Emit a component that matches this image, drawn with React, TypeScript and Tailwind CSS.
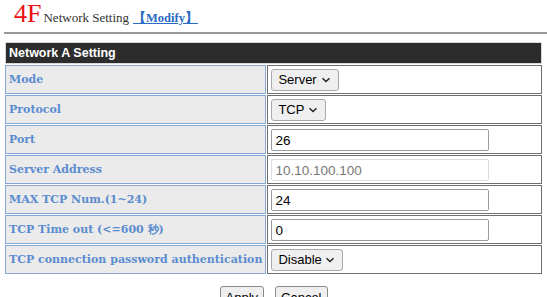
import { useState } from "react";

const rows = [
  { label: "Mode", kind: "select", value: "Server", w: "w-[68px]" },
  { label: "Protocol", kind: "select", value: "TCP", w: "w-[55px]" },
  { label: "Port", kind: "input", value: "26" },
  { label: "Server Address", kind: "input", value: "10.10.100.100", disabled: true },
  { label: "MAX TCP Num.(1~24)", kind: "input", value: "24" },
  { label: "TCP Time out (<=600 秒)", kind: "input", value: "0" },
  { label: "TCP connection password authentication", kind: "select", value: "Disable", w: "w-[72px]" },
];

function Chevron() {
  return (
    <svg width="10" height="6" viewBox="0 0 10 6" className="shrink-0">
      <path d="M1.5 1.2 L5 4.6 L8.5 1.2" fill="none" stroke="#222" strokeWidth="1.4" />
    </svg>
  );
}

export default function App() {
  const [vals, setVals] = useState(rows.map((r) => r.value));

  return (
    <div className="w-[547px] h-[297px] overflow-hidden bg-white font-['Liberation_Serif',serif]">
      {/* title */}
      <div className="flex items-baseline pl-[14px] pt-[1px] h-[32px]">
        <span className="text-[26px] leading-none text-[#ee1111]">4F</span>
        <span className="ml-[2px] text-[13px] text-[#333]">Network Setting</span>
        <a href="#" className="ml-[4px] text-[12.5px] font-bold text-[#2a6bc4] underline">【Modify】</a>
      </div>
      <div className="ml-[4px] h-[2px] bg-[#9a9a9a]" />

      <table className="mt-[7px] ml-[4px] w-[539px] border-separate border-spacing-[1px]">
        <thead>
          <tr>
            <th
              colSpan={2}
              className="h-[22px] bg-[#2c2c2c] border border-[#d8d8d8] px-[3px] text-left text-[12.5px] font-bold text-white font-['Liberation_Sans',sans-serif]"
            >
              Network A Setting
            </th>
          </tr>
        </thead>
        <tbody>
          {rows.map((r, i) => (
            <tr key={r.label}>
              <td className="w-[261px] h-[29px] bg-[#ebebeb] border border-[#86a7d3] px-[3px] pt-[2px] text-[11px] font-bold text-[#5b8bd0] whitespace-nowrap font-['DejaVu_Serif',serif]">
                {r.label}
              </td>
              <td className="h-[29px] bg-white border border-[#6e6e6e] px-[3px]">
                {r.kind === "select" ? (
                  <div
                    className={`${r.w} h-[22px] flex items-center justify-between pl-[6px] pr-[7px] rounded-[3px] border border-[#a8a8a8] bg-[#efefef] text-[13px] text-black font-['Liberation_Sans',sans-serif]`}
                  >
                    <span>{vals[i]}</span>
                    <Chevron />
                  </div>
                ) : (
                  <input
                    value={vals[i]}
                    disabled={r.disabled}
                    onChange={(e) => setVals(vals.map((v, j) => (j === i ? e.target.value : v)))}
                    className={`w-[218px] h-[22px] px-[3px] rounded-[2px] border text-[13.5px] font-['Liberation_Sans',sans-serif] outline-none ${
                      r.disabled ? "border-[#dcdcdc] text-[#777] bg-white" : "border-[#9a9a9a] text-black"
                    }`}
                  />
                )}
              </td>
            </tr>
          ))}
        </tbody>
      </table>

      <div className="mt-[11px] flex justify-center gap-[11px] font-['Liberation_Sans',sans-serif] text-[13px]">
        <button className="h-[24px] px-[5px] rounded-[3px] border border-[#8a8a8a] bg-[#efefef] text-black">Apply</button>
        <button className="h-[24px] px-[5px] rounded-[3px] border border-[#8a8a8a] bg-[#efefef] text-black">Cancel</button>
      </div>
    </div>
  );
}
